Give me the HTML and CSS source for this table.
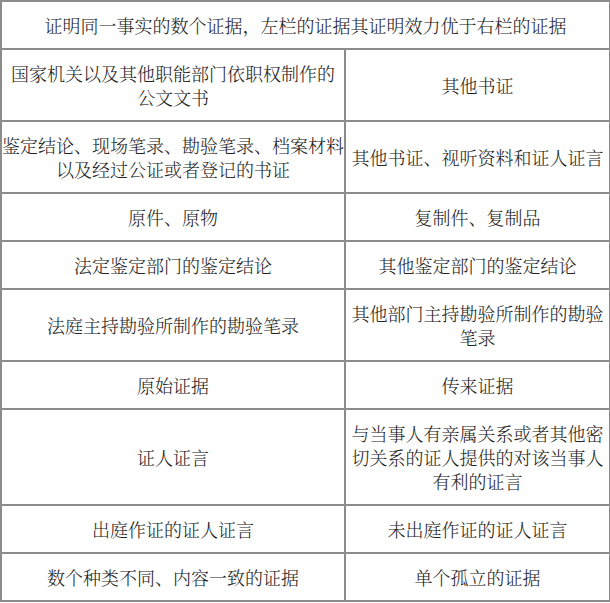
FILE: index.html
```html
<!DOCTYPE html>
<html lang="zh-CN">
<head>
<meta charset="utf-8">
<link rel="stylesheet" href="styles.css">
</head>
<body>
<table class="evidence">
  <colgroup>
    <col class="col-left">
    <col class="col-right">
  </colgroup>
  <tr><td class="head" colspan="2">证明同一事实的数个证据，左栏的证据其证明效力优于右栏的证据</td></tr>
  <tr><td>国家机关以及其他职能部门依职权制作的<br>公文文书</td><td>其他书证</td></tr>
  <tr><td>鉴定结论、现场笔录、勘验笔录、档案材料<br>以及经过公证或者登记的书证</td><td>其他书证、视听资料和证人证言</td></tr>
  <tr><td>原件、原物</td><td>复制件、复制品</td></tr>
  <tr><td>法定鉴定部门的鉴定结论</td><td>其他鉴定部门的鉴定结论</td></tr>
  <tr><td>法庭主持勘验所制作的勘验笔录</td><td>其他部门主持勘验所制作的勘验<br>笔录</td></tr>
  <tr><td>原始证据</td><td>传来证据</td></tr>
  <tr><td>证人证言</td><td>与当事人有亲属关系或者其他密<br>切关系的证人提供的对该当事人<br>有利的证言</td></tr>
  <tr><td>出庭作证的证人证言</td><td>未出庭作证的证人证言</td></tr>
  <tr><td>数个种类不同、内容一致的证据</td><td>单个孤立的证据</td></tr>
</table>
</body>
</html>
```

FILE: styles.css
```css
html, body {
  margin: 0;
  padding: 0;
  background: #ffffff;
}

.evidence {
  border-collapse: collapse;
  table-layout: fixed;
  width: 609px;
  margin: 0;
  font-family: "Noto Serif CJK SC", "Liberation Serif", "Noto Sans CJK SC", serif;
  font-size: 18px;
  font-weight: 300;
  line-height: 24px;
  color: #222222;
}

.col-left { width: 344px; }
.col-right { width: 265px; }

.evidence td {
  border: 2px solid #8c8c8c;
  padding: 11px 0;
  text-align: center;
  vertical-align: middle;
  white-space: nowrap;
  overflow: hidden;
}
```
